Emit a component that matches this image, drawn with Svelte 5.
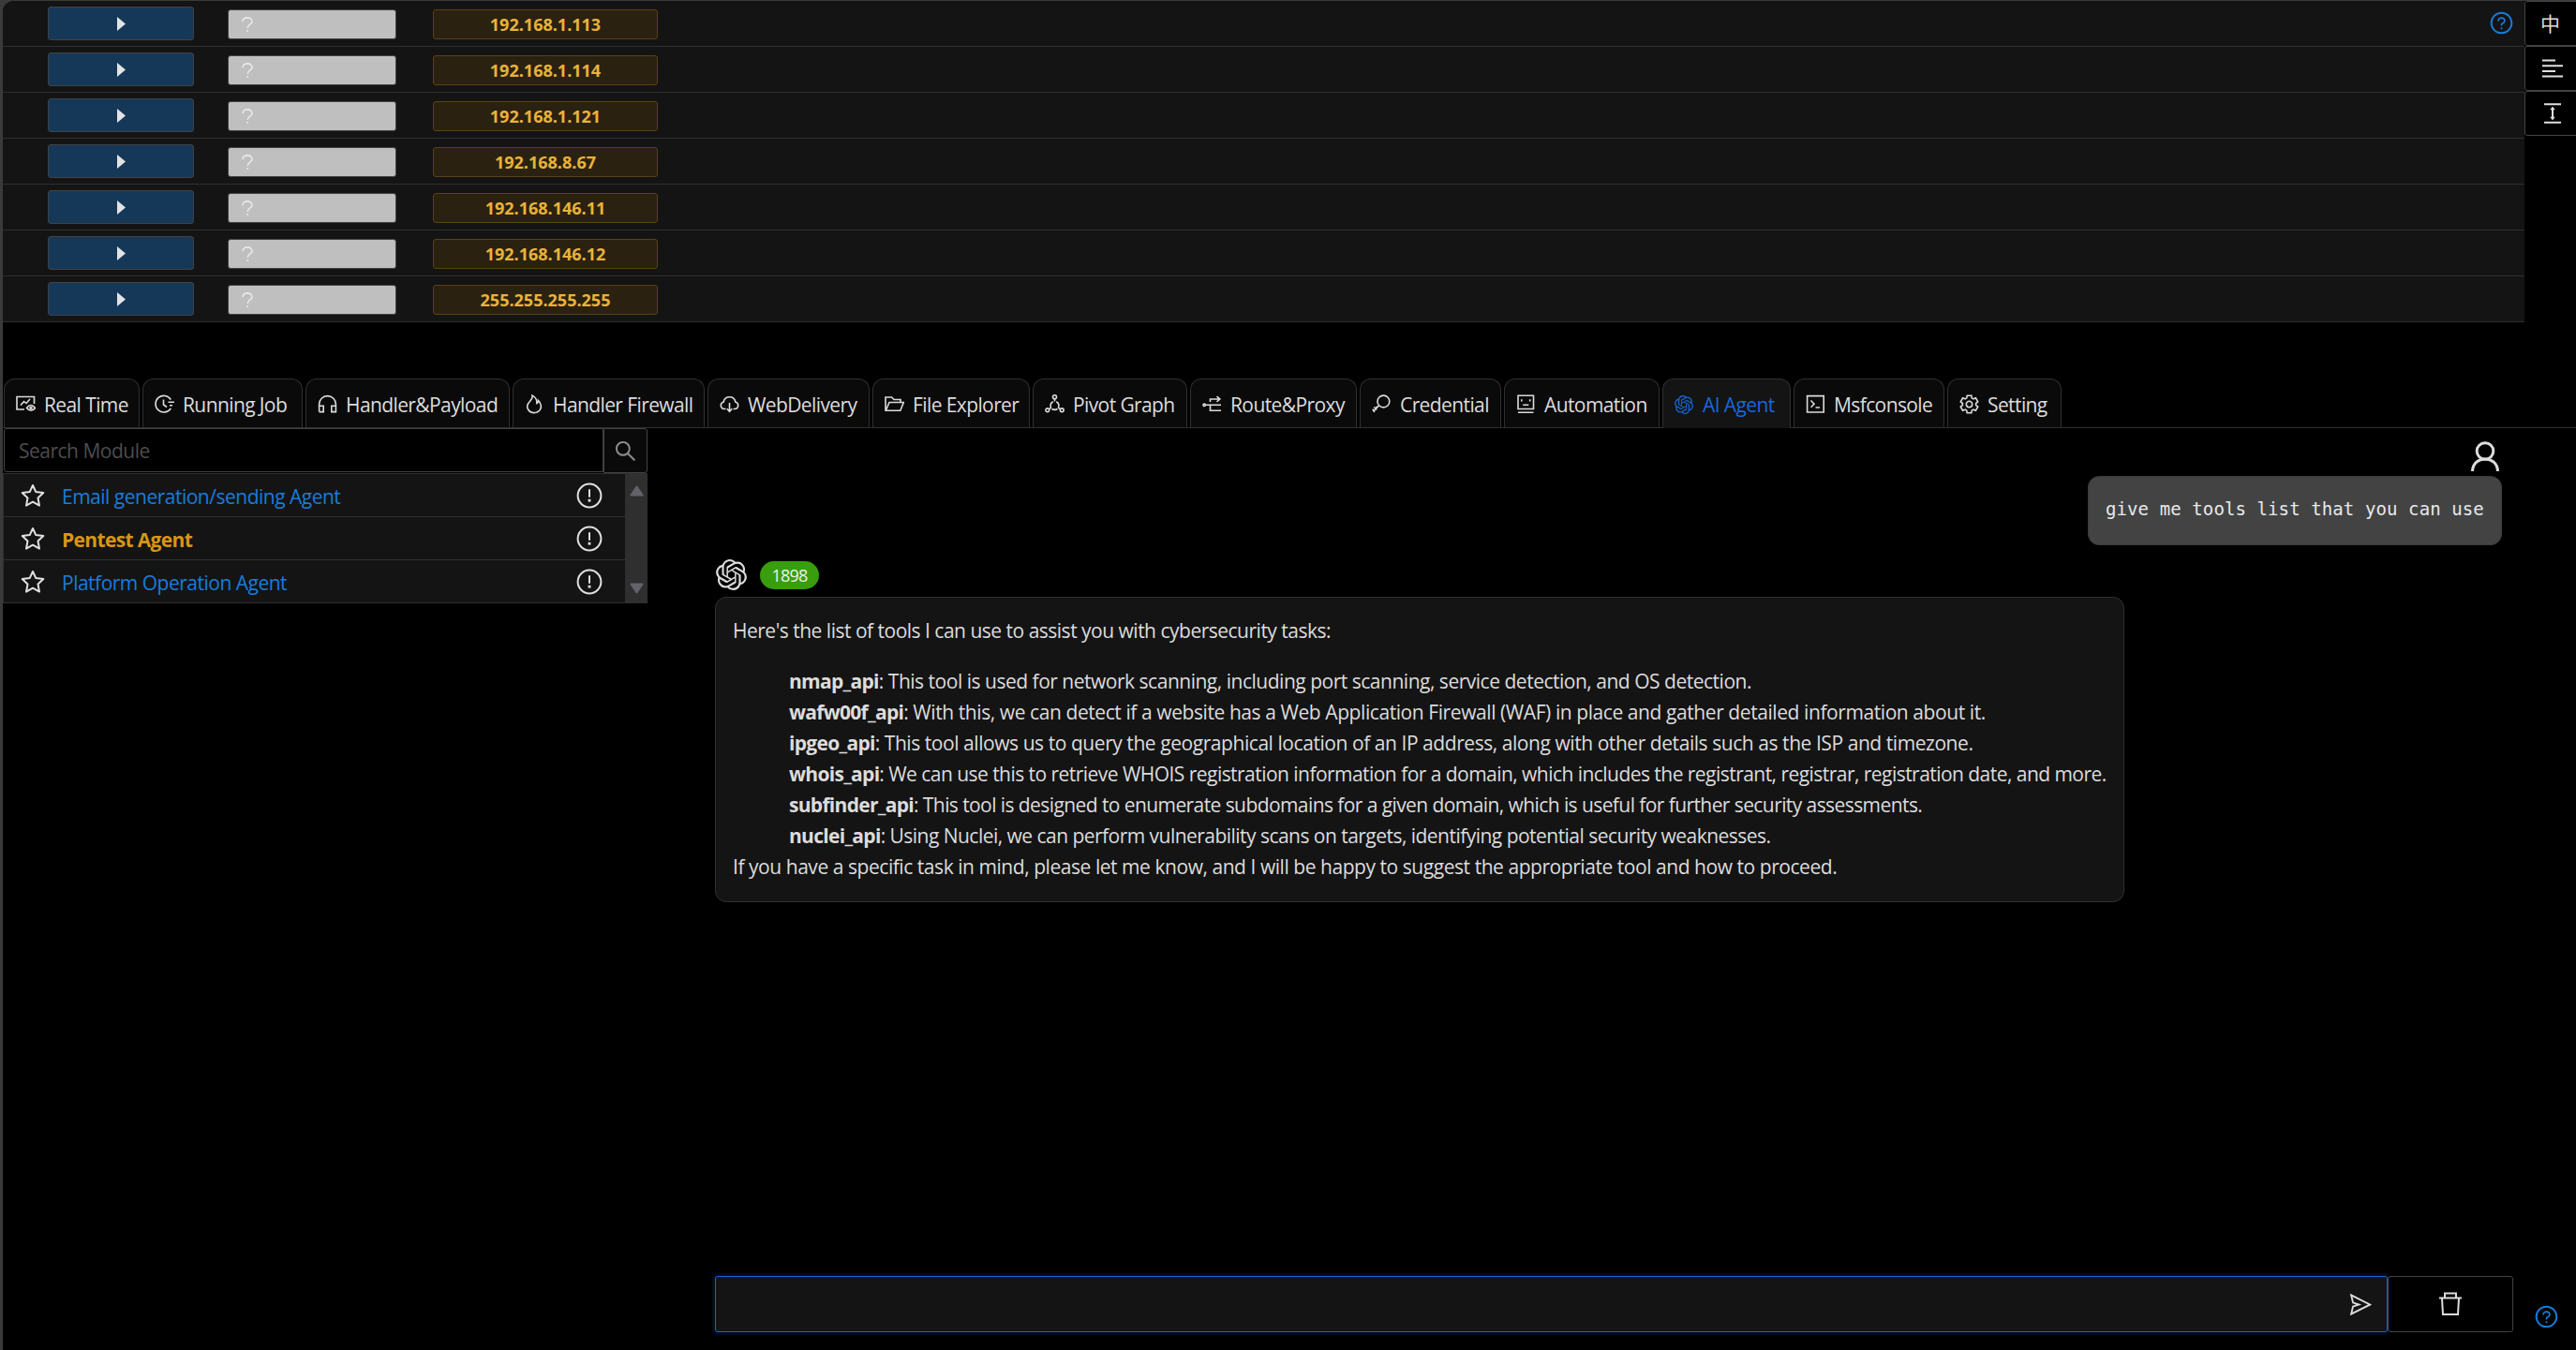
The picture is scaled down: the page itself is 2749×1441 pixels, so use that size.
<script>
    const hosts = [
        '192.168.1.113',
        '192.168.1.114',
        '192.168.1.121',
        '192.168.8.67',
        '192.168.146.11',
        '192.168.146.12',
        '255.255.255.255'
    ];

    // stroke icons, drawn on a 21x21 grid
    const tabs = [
        { label: 'Real Time', width: 145, icon: 'M9 16H1V2.5H19.5V10M5 11.5L8.5 7.5L11 9.5L15 5M11.5 14.5Q16 8.5 20.5 14.5Q16 20 11.5 14.5ZM15 14.5a1 1 0 1 0 2 0a1 1 0 1 0-2 0' },
        { label: 'Running Job', width: 171, icon: 'M17.3 5.5A8.8 8.8 0 1 0 17.3 14.8M9.5 5.5V11L13 13.5M14.5 8.3H21M16 11.8H19' },
        { label: 'Handler&Payload', width: 218, icon: 'M1.6 18.6V10.5A8.9 8.9 0 0 1 19.4 10.5V18.6H14.8V12.3H19.4M1.6 12.3H6.2V18.6H1.6' },
        { label: 'Handler Firewall', width: 205, icon: 'M8 1.2C9 5 5.5 7 3.8 9.5C.8 14 4.5 19.6 10 19.6C15.5 19.6 19 14.5 16.5 9.5C16 8.3 15.3 7.3 14.5 6.5C14.6 8 14 9 12.8 9.5C13.2 6 11 2.5 8 1.2Z' },
        { label: 'WebDelivery', width: 173, icon: 'M6.5 15.5H5C.2 15 .2 9 4.2 8C5.5 1 15.5 1 16.8 8C20.8 9 20.8 15 16 15.5H14.5M10.5 9V18.3M7.8 15.3L10.5 18.3L13.2 15.3' },
        { label: 'File Explorer', width: 168, icon: 'M1 17.3V3H7.5L10 5.5H17V8.5M1.3 17.3L5 8.5H20.3L16.8 17.3Z' },
        { label: 'Pivot Graph', width: 165, icon: 'M8.5 2.8a2 2 0 1 0 4 0a2 2 0 1 0-4 0M.9 16.8a1.9 1.9 0 1 0 3.8 0a1.9 1.9 0 1 0-3.8 0M16.3 16.8a1.9 1.9 0 1 0 3.8 0a1.9 1.9 0 1 0-3.8 0M10.5 5V7.5M8.8 7.8C6 9.3 5.8 12 6.5 14M12.2 7.8C15 9.3 15.2 12 14.5 14M7.5 15.5Q10.5 17.3 13.5 15.5M7 13.8L4.3 15.8M14 13.8L16.7 15.8' },
        { label: 'Route&Proxy', width: 178, icon: 'M1 11.3a1.2 1.2 0 1 0 2.4 0a1.2 1.2 0 1 0-2.4 0M3 11.3H20M8.5 8V5H18.5M15.5 2.2L18.8 5L15.5 7.8M8.5 11.3V17.3H20' },
        { label: 'Credential', width: 151, icon: 'M6 7.5a6.4 6.4 0 1 0 12.8 0a6.4 6.4 0 1 0-12.8 0M7.6 12L1.3 18.3M2.2 13.5L5.3 16.3M.8 15.8L3 18.8M4.5 12.8L6 14.5' },
        { label: 'Automation', width: 166, icon: 'M2 1.2H18.5V15.5H2ZM2 19.2H18.5M5.8 5.3V7.5M14.7 5.3V7.5M7.2 11.2H13.3' },
        { label: 'AI Agent', width: 137, icon: 'openai', active: true },
        { label: 'Msfconsole', width: 161, icon: 'M1.6 1.6H19.2V19H1.6ZM5.5 6.5L9 10.2L5.5 13.8M10.5 14H15' },
        { label: 'Setting', width: 122, icon: gear() }
    ];

    const agents = [
        { name: 'Email generation/sending Agent' },
        { name: 'Pentest Agent', selected: true },
        { name: 'Platform Operation Agent' }
    ];

    // name, description, letter spacing
    const tools = [
        ['nmap_api', 'This tool is used for network scanning, including port scanning, service detection, and OS detection.', -0.485],
        ['wafw00f_api', 'With this, we can detect if a website has a Web Application Firewall (WAF) in place and gather detailed information about it.', -0.42],
        ['ipgeo_api', 'This tool allows us to query the geographical location of an IP address, along with other details such as the ISP and timezone.', -0.44],
        ['whois_api', 'We can use this to retrieve WHOIS registration information for a domain, which includes the registrant, registrar, registration date, and more.', -0.54],
        ['subfinder_api', 'This tool is designed to enumerate subdomains for a given domain, which is useful for further security assessments.', -0.58],
        ['nuclei_api', 'Using Nuclei, we can perform vulnerability scans on targets, identifying potential security weaknesses.', -0.53]
    ];

    // six-toothed cog around a small ring
    function gear() {
        const points = [];
        for (let i = 0; i < 6; i++) {
            for (const [r, a] of [[7.2, -22], [9.6, -14], [9.6, 14], [7.2, 22]]) {
                const t = ((i * 60 + a - 90) * Math.PI) / 180;
                points.push((10.5 + r * Math.cos(t)).toFixed(2) + ' ' + (10.5 + r * Math.sin(t)).toFixed(2));
            }
        }
        return 'M' + points.join('L') + 'ZM7.3 10.5a3.2 3.2 0 1 0 6.4 0a3.2 3.2 0 1 0-6.4 0';
    }

    let message = $state('');
    let search = $state('');
</script>

{#snippet openai(size)}
    <svg width={size} height={size} viewBox="0 0 24 24" fill="currentColor"><path d="M22.2819 9.8211a5.9847 5.9847 0 0 0-.5157-4.9108 6.0462 6.0462 0 0 0-6.5098-2.9A6.0651 6.0651 0 0 0 4.9807 4.1818a5.9847 5.9847 0 0 0-3.9977 2.9 6.0462 6.0462 0 0 0 .7427 7.0966 5.98 5.98 0 0 0 .511 4.9107 6.051 6.051 0 0 0 6.5146 2.9001A5.9847 5.9847 0 0 0 13.2599 24a6.0557 6.0557 0 0 0 5.7718-4.2058 5.9894 5.9894 0 0 0 3.9977-2.9001 6.0557 6.0557 0 0 0-.7475-7.0729zm-9.022 12.6081a4.4755 4.4755 0 0 1-2.8764-1.0408l.1419-.0804 4.7783-2.7582a.7948.7948 0 0 0 .3927-.6813v-6.7369l2.02 1.1686a.071.071 0 0 1 .038.052v5.5826a4.504 4.504 0 0 1-4.4945 4.4944zm-9.6607-4.1254a4.4708 4.4708 0 0 1-.5346-3.0137l.142.0852 4.783 2.7582a.7712.7712 0 0 0 .7806 0l5.8428-3.3685v2.3324a.0804.0804 0 0 1-.0332.0615L9.74 19.9502a4.4992 4.4992 0 0 1-6.1408-1.6464zM2.3408 7.8956a4.485 4.485 0 0 1 2.3655-1.9728V11.6a.7664.7664 0 0 0 .3879.6765l5.8144 3.3543-2.0201 1.1685a.0757.0757 0 0 1-.071 0l-4.8303-2.7865A4.504 4.504 0 0 1 2.3408 7.872zm16.5963 3.8558L13.1038 8.364 15.1192 7.2a.0757.0757 0 0 1 .071 0l4.8303 2.7913a4.4944 4.4944 0 0 1-.6765 8.1042v-5.6772a.79.79 0 0 0-.407-.667zm2.0107-3.0231l-.142-.0852-4.7735-2.7818a.7759.7759 0 0 0-.7854 0L9.409 9.2297V6.8974a.0662.0662 0 0 1 .0284-.0615l4.8303-2.7866a4.4992 4.4992 0 0 1 6.6802 4.66zM8.3065 12.863l-2.02-1.1638a.0804.0804 0 0 1-.038-.0567V6.0742a4.4992 4.4992 0 0 1 7.3757-3.4537l-.142.0805L8.704 5.459a.7948.7948 0 0 0-.3927.6813zm1.0976-2.3654l2.602-1.4998 2.6069 1.4998v2.9994l-2.5974 1.4997-2.6067-1.4997Z" /></svg>
{/snippet}

{#snippet help()}
    <svg width="27" height="27" viewBox="0 0 1024 1024" fill="currentColor">
        <path d="M512 64C264.6 64 64 264.6 64 512s200.6 448 448 448 448-200.6 448-448S759.4 64 512 64zm0 820c-205.4 0-372-166.6-372-372s166.6-372 372-372 372 166.6 372 372-166.6 372-372 372z" />
        <path d="M623.6 316.7C593.6 290.4 554 276 512 276s-81.6 14.5-111.6 40.7C369.2 344 352 380.7 352 420v7.6c0 4.4 3.6 8 8 8h48c4.4 0 8-3.6 8-8V420c0-44.1 43.1-80 96-80s96 35.9 96 80c0 31.1-22 59.6-56.1 72.7-21.2 8.1-39.2 22.3-52.1 40.9-13.1 19-19.9 41.8-19.9 64.9V620c0 4.4 3.6 8 8 8h48c4.4 0 8-3.6 8-8v-22.7a48.3 48.3 0 0130.9-44.8c59-22.7 97.1-74.7 97.1-132.5.1-39.3-17.1-76-48.3-103.3zM472 732a40 40 0 1080 0 40 40 0 10-80 0z" />
    </svg>
{/snippet}

<main>
    <section class="top">
        <div class="hosts">
            {#each hosts as ip}
                <div class="host">
                    <button class="expand" aria-label="expand">
                        <svg width="9" height="15" viewBox="0 0 9 15"><path d="M0 0L9 7.5L0 15Z" fill="#e3e3e3" /></svg>
                    </button>
                    <span class="os">
                        <svg width="12" height="16" viewBox="0 0 12 16" fill="none" stroke="#e9eaea" stroke-width="1.6"><path d="M1 5.2C1 -.6 11 -.6 11 5.2C11 8 6.2 8 6.2 12M6.2 13.9V15.8" /></svg>
                    </span>
                    <span class="ip">{ip}</span>
                </div>
            {/each}
            <span class="top-help">{@render help()}</span>
        </div>
        <div class="tools">
            <button class="lang">中</button>
            <button aria-label="align">
                <svg width="22" height="20" viewBox="0 0 22 20" stroke="#e0e0e0" stroke-width="2"><path d="M0 1.5H14M0 7.2H22M0 13H14M0 18.5H22" /></svg>
            </button>
            <button aria-label="height">
                <svg class="height" width="18" height="22" viewBox="0 0 18 22" stroke="#e0e0e0" stroke-width="2"><path d="M0 1.3H18M0 20.7H18M9 5V17" /><path d="M9 4L11.2 7H6.8ZM9 18L11.2 15H6.8Z" fill="#e0e0e0" stroke-width=".6" /></svg>
            </button>
        </div>
    </section>

    <nav>
        {#each tabs as tab}
            <button class="tab" class:active={tab.active} style="width: {tab.width}px">
                {#if tab.icon === 'openai'}
                    {@render openai(20)}
                {:else}
                    <svg width="21" height="21" viewBox="0 0 21 21" fill="none" stroke="currentColor" stroke-width="1.6"><path d={tab.icon} /></svg>
                {/if}
                <span>{tab.label}</span>
            </button>
        {/each}
    </nav>

    <section class="bottom">
        <aside>
            <div class="search">
                <input placeholder="Search Module" bind:value={search} />
                <button aria-label="search">
                    <svg width="27" height="27" viewBox="0 0 1024 1024" fill="#8c8c8c"><path d="M909.6 854.5L649.9 594.8C690.2 542.7 712 479 712 412c0-80.2-31.3-155.4-87.9-212.1-56.6-56.7-132-87.9-212.1-87.9s-155.5 31.3-212.1 87.9C143.2 256.5 112 331.8 112 412c0 80.1 31.3 155.5 87.9 212.1C256.5 680.8 331.8 712 412 712c67 0 130.6-21.8 182.7-62l259.7 259.6a8.2 8.2 0 0011.6 0l43.6-43.5a8.2 8.2 0 000-11.6zM570.4 570.4C528 612.7 471.8 636 412 636s-116-23.3-158.4-65.6C211.3 528 188 471.8 188 412s23.3-116.1 65.6-158.4C296 211.3 352.2 188 412 188s116.1 23.2 158.4 65.6S636 352.2 636 412s-23.3 116.1-65.6 158.4z" /></svg>
                </button>
            </div>
            <div class="list">
                <ul>
                    {#each agents as agent}
                        <li class:selected={agent.selected}>
                            <svg width="26" height="26" viewBox="0 0 26 26" fill="none" stroke="#e0e0e0" stroke-width="2" stroke-linejoin="round"><path d="M13 2L16.3 9.1L24.3 10.1L18.5 15.5L20 23.6L13 19.7L6 23.6L7.5 15.5L1.7 10.1L9.7 9.1Z" /></svg>
                            <span>{agent.name}</span>
                            <svg width="28" height="28" viewBox="0 0 28 28" fill="none" stroke="#e0e0e0" stroke-width="2"><circle cx="14" cy="14" r="12.4" /><path d="M14 7.3V15.8" /><path d="M14 17.8V20.6" stroke-width="2.8" /></svg>
                        </li>
                    {/each}
                </ul>
                <div class="scrollbar">
                    <svg width="15" height="12" viewBox="0 0 15 12"><path d="M7.5 1.5L13.5 10.5H1.5Z" /></svg>
                    <svg width="15" height="12" viewBox="0 0 15 12"><path d="M1.5 1.5H13.5L7.5 10.5Z" /></svg>
                </div>
            </div>
        </aside>

        <div class="chat">
            <div class="user">
                <svg width="30" height="32" viewBox="0 0 30 32" fill="none" stroke="#dcdcdc" stroke-width="3"><circle cx="15" cy="10.5" r="8.8" /><path d="M1.5 32C2 14.5 28 14.5 28.5 32" /></svg>
                <p>give me tools list that you can use</p>
            </div>
            <div class="reply">
                <div class="meta">
                    {@render openai(33)}
                    <span class="badge">1898</span>
                </div>
                <div class="answer">
                    <p>Here's the list of tools I can use to assist you with cybersecurity tasks:</p>
                    <ul>
                        {#each tools as [name, text, spacing]}
                            <li style="letter-spacing: {spacing}px"><strong>{name}</strong>: {text}</li>
                        {/each}
                    </ul>
                    <p class="closing">If you have a specific task in mind, please let me know, and I will be happy to suggest the appropriate tool and how to proceed.</p>
                </div>
            </div>
            <div class="compose">
                <div class="field">
                    <input aria-label="message" bind:value={message} />
                    <svg width="27" height="27" viewBox="0 0 1024 1024" fill="#dcdcdc"><path d="M931.4 498.9L94.9 79.5c-3.4-1.7-7.3-2.1-11-1.2-8.5 2.1-13.8 10.7-11.7 19.3l86.2 352.2c1.3 5.3 5.2 9.6 10.4 11.3l147.7 50.7-147.6 50.7c-5.2 1.8-9.1 6-10.3 11.3L72.2 926.5c-.9 3.7-.5 7.6 1.2 10.9 3.9 7.9 13.5 11.1 21.5 7.2l836.5-417c3.1-1.5 5.6-4.1 7.2-7.1 3.9-8 .7-17.6-7.2-21.6zM170.8 826.3l50.3-205.6 295.2-101.3c2.3-.8 4.2-2.6 5-5 1.4-4.2-.8-8.7-5-10.2L221.1 403 171 198.2l628 314.9-628.2 313.2z" /></svg>
                </div>
                <button class="clear" aria-label="clear">
                    <svg width="24" height="26" viewBox="0 0 24 26" fill="none" stroke="#dcdcdc" stroke-width="2"><path d="M0 6.5H24M6 6V1.5H18V6M3 7L4 24H20L21 7" /></svg>
                </button>
            </div>
        </div>
        <span class="bottom-help">{@render help()}</span>
    </section>
</main>

<style>
    :global(body) {
        background: #3a3a3a;
        overflow: hidden;
    }

    main {
        box-sizing: border-box;
        height: 1440px;
        margin: 1px 0 0 3px;
        border-radius: 12px 0 0 0;
        overflow: hidden;
        background: #000;
        color: #dcdcdc;
        font-family: 'Open Sans', 'Noto Sans CJK SC', sans-serif;
        font-size: 21px;
        letter-spacing: -.5px;
        display: flex;
        flex-direction: column;
    }

    button, input {
        box-sizing: border-box;
        margin: 0;
        padding: 0;
        font: inherit;
        letter-spacing: inherit;
        color: inherit;
        background: none;
        border: none;
        outline: none;
    }

    svg {
        display: block;
        flex: none;
    }

    ul {
        list-style: none;
        margin: 0;
        padding: 0;
    }

    /* hosts */
    .top {
        display: flex;
        height: 403px;
    }

    .hosts {
        position: relative;
        flex: 1;
    }

    .host {
        box-sizing: border-box;
        display: flex;
        height: 49px;
        padding: 6px 0 0 48px;
        background: #141414;
        border-bottom: 1px solid #303030;
    }

    .expand {
        width: 156px;
        height: 36px;
        padding-left: 73px;
        background: #153859;
        border: 1px solid #424242;
        border-radius: 3px;
    }

    .os {
        box-sizing: border-box;
        width: 180px;
        height: 32px;
        margin: 3px 39px 0 36px;
        padding: 7px 0 0 14px;
        background: #bfbfbf;
        border: 1px solid #424242;
        border-radius: 3px;
    }

    .ip {
        box-sizing: border-box;
        width: 240px;
        height: 32px;
        margin-top: 3px;
        background: #2b2111;
        border: 1px solid #594214;
        border-radius: 3px;
        color: #e8b339;
        font-size: 18px;
        font-weight: bold;
        line-height: 30px;
        letter-spacing: 0;
        text-align: center;
    }

    .top-help {
        position: absolute;
        right: 11px;
        top: 10px;
        color: #177ddc;
    }

    .tools {
        width: 55px;
    }

    .tools button {
        display: flex;
        align-items: center;
        width: 60px;
        height: 48px;
        padding-left: 18px;
        border: 1px solid #424242;
        border-radius: 3px;
        line-height: 1;
    }

    .tools .lang {
        padding: 1px 0 0 16px;
    }

    .tools .height {
        margin-left: 2px;
    }

    /* tabs */
    nav {
        display: flex;
        gap: 3px;
        height: 53px;
        padding-left: 1px;
        box-sizing: border-box;
        border-bottom: 1px solid #303030;
    }

    .tab {
        display: flex;
        align-items: center;
        gap: 9px;
        padding: 2px 0 0 12px;
        white-space: nowrap;
        background: #0a0a0a;
        border: 1px solid #303030;
        border-bottom: none;
        border-radius: 12px 12px 0 0;
        letter-spacing: -.6px;
    }

    .tab.active {
        height: 53px;
        gap: 10px;
        background: #141414;
        color: #1668dc;
    }

    /* module list */
    .bottom {
        position: relative;
        flex: 1;
        display: flex;
    }

    aside {
        width: 688px;
    }

    .search {
        display: flex;
        height: 48px;
    }

    .search input {
        width: 640px;
        height: 47px;
        margin-left: 1px;
        padding: 0 15px;
        border: 1px solid #424242;
        border-radius: 3px 0 0 3px;
    }

    .search input::placeholder {
        color: #4d4d4d;
        opacity: 1;
    }

    .search button {
        width: 47px;
        height: 48px;
        padding-left: 9px;
        background: #0a0a0a;
        border: 1px solid #424242;
        border-radius: 0 3px 3px 0;
    }

    .list {
        display: flex;
        height: 139px;
    }

    .list ul {
        flex: 1;
        border: 1px solid #303030;
        border-width: 1px 0 0 1px;
    }

    .list li {
        box-sizing: border-box;
        display: flex;
        align-items: center;
        height: 46px;
        padding: 1px 24px 0 18px;
        background: #141414;
        border-bottom: 1px solid #303030;
        color: #177ddc;
    }

    .list li span {
        flex: 1;
        padding: 1px 0 0 18px;
    }

    .list .selected {
        color: #d89614;
        font-weight: bold;
        letter-spacing: -.65px;
    }

    .scrollbar {
        box-sizing: border-box;
        display: flex;
        flex-direction: column;
        align-items: center;
        justify-content: space-between;
        width: 24px;
        padding: 13px 0 10px;
        background: #2f2f2f;
    }

    .scrollbar path {
        fill: #62626c;
        stroke: #62626c;
        stroke-width: 2;
        stroke-linejoin: round;
    }

    /* chat */
    .chat {
        display: flex;
        flex-direction: column;
        width: 1919px;
        margin-left: 72px;
        padding: 14px 0 19px;
    }

    .user {
        display: flex;
        flex-direction: column;
        align-items: flex-end;
        padding-right: 12px;
    }

    .user svg {
        margin-right: 3px;
    }

    .user p {
        box-sizing: border-box;
        width: 442px;
        height: 74px;
        margin: 5px 0 0;
        padding-left: 18px;
        background: #434343;
        border: 1px solid #3b3b3b;
        border-radius: 12px;
        font-family: 'DejaVu Sans Mono', monospace;
        font-size: 19px;
        letter-spacing: .1px;
        line-height: 69px;
        color: #e8e8e8;
    }

    .meta {
        display: flex;
        align-items: center;
        gap: 14px;
        height: 34px;
        margin: 14px 0 7px 1px;
    }

    .badge {
        width: 63px;
        height: 30px;
        margin-top: 1px;
        border-radius: 15px;
        background: #389e0d;
        color: #f0f0f0;
        font-size: 18px;
        letter-spacing: -.8px;
        line-height: 31px;
        text-align: center;
    }

    .answer {
        box-sizing: border-box;
        width: 1504px;
        height: 326px;
        padding: 19px 18px 0;
        background: #141414;
        border: 1px solid #303030;
        border-radius: 12px;
        line-height: 33px;
        white-space: nowrap;
    }

    .answer p {
        margin: 0;
    }

    .answer .closing {
        letter-spacing: -.45px;
    }

    .answer ul {
        margin-top: 21px;
        padding-left: 60px;
    }

    .answer strong {
        letter-spacing: -.7px;
    }

    .compose {
        display: flex;
        height: 60px;
        margin-top: auto;
    }

    .field {
        box-sizing: border-box;
        display: flex;
        align-items: center;
        width: 1785px;
        padding-right: 14px;
        background: #141414;
        border: 1px solid #1765d4;
        border-radius: 3px;
        box-shadow: 0 0 0 3px #050b1c;
    }

    .field input {
        flex: 1;
        height: 100%;
        padding: 0 16px;
    }

    .clear {
        display: flex;
        align-items: center;
        justify-content: center;
        width: 134px;
        border: 1px solid #424242;
        border-radius: 3px;
    }

    .bottom-help {
        position: absolute;
        right: 18px;
        bottom: 22px;
        color: #177ddc;
    }
</style>
